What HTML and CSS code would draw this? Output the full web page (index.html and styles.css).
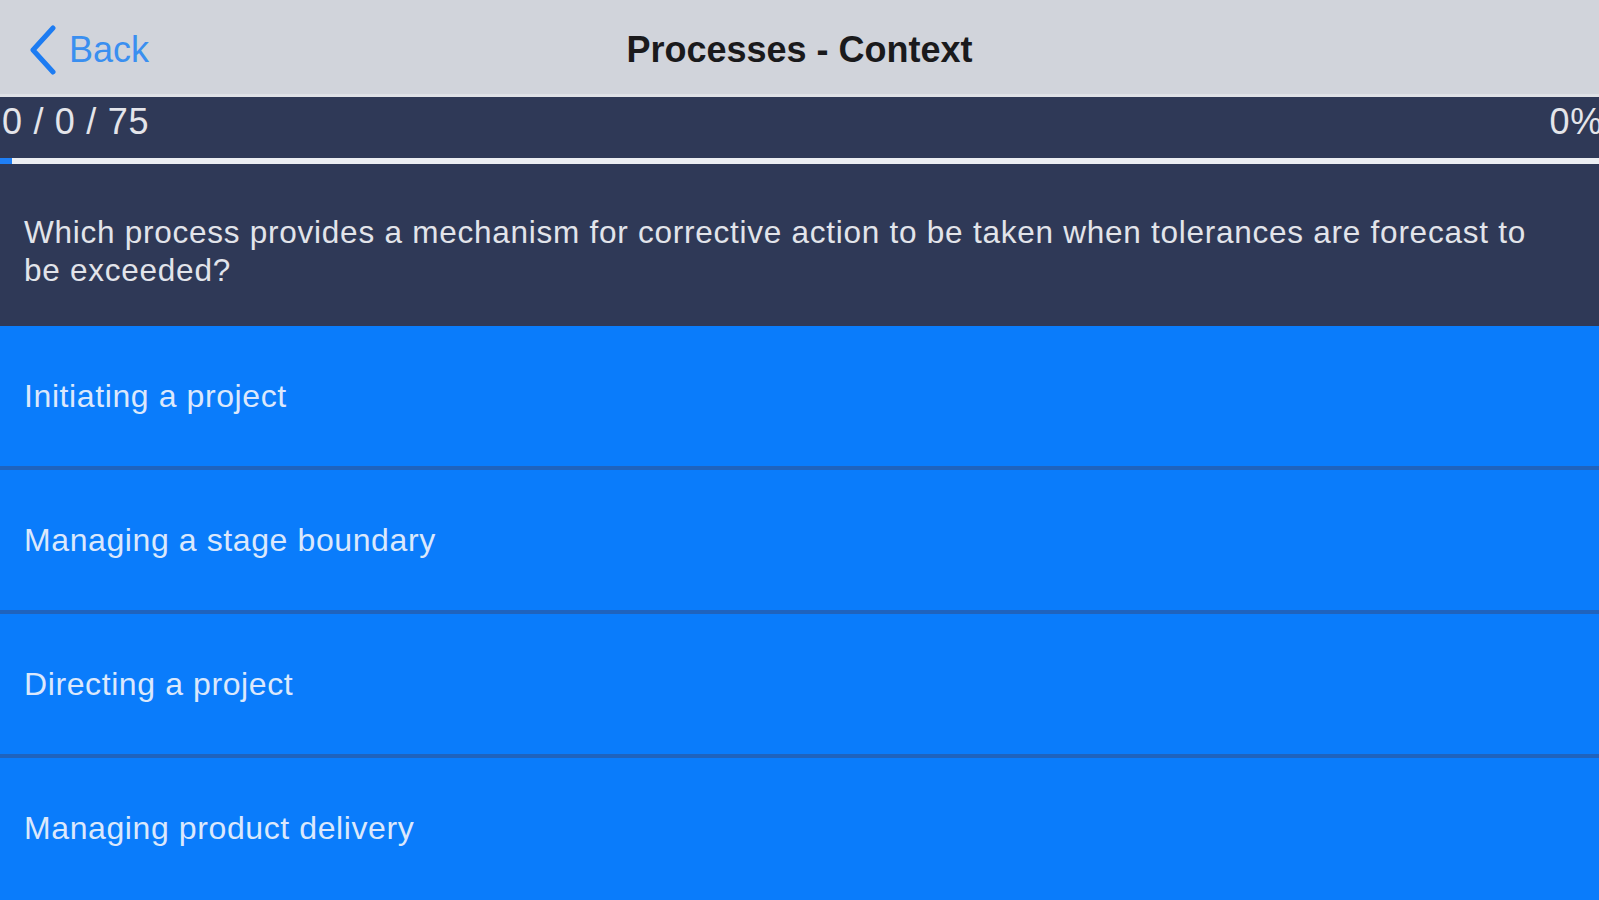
FILE: index.html
```html
<!DOCTYPE html>
<html>
<head>
<meta charset="utf-8">
<link rel="stylesheet" href="styles.css">
</head>
<body>
<header class="nav">
  <div class="back">
    <svg class="chev" width="30" height="50" viewBox="0 0 30 50"><polyline points="25,3 5,25 25,47" fill="none" stroke="#1d7cf2" stroke-width="5" stroke-linecap="round" stroke-linejoin="round"/></svg>
    <span class="back-label">Back</span>
  </div>
  <div class="title">Processes - Context</div>
</header>
<section class="status">
  <div class="counts">
    <span>0 / 0 / 75</span>
    <span class="pct">0%</span>
  </div>
  <div class="track"><div class="fill"></div></div>
</section>
<section class="question">
  Which process provides a mechanism for corrective action to be taken when tolerances are forecast to be exceeded?
</section>
<ul class="options">
  <li>Initiating a project</li>
  <li>Managing a stage boundary</li>
  <li>Directing a project</li>
  <li>Managing product delivery</li>
</ul>
</body>
</html>
```
FILE: styles.css
```css
html, body {
  margin: 0;
  padding: 0;
  width: 1599px;
  height: 900px;
  overflow: hidden;
  background: #0a7cfb;
  font-family: "Liberation Sans", Arial, sans-serif;
}
.nav {
  position: relative;
  height: 94px;
  background: #d1d4db;
  border-bottom: 3px solid #dfe1e6;
  display: flex;
  align-items: center;
  justify-content: center;
}
.back {
  position: absolute;
  left: 28px;
  top: 25px;
  display: flex;
  align-items: center;
  gap: 11px;
}
.chev { display: block; }
.back-label {
  color: #3a8ff0;
  font-size: 36px;
  line-height: 48px;
}
.title {
  font-size: 36px;
  font-weight: bold;
  color: #1a1a1c;
  margin-top: 6px;
}
.status {
  background: #2f3957;
  padding-top: 3px;
}
.counts {
  display: flex;
  justify-content: space-between;
  height: 44px;
  line-height: 44px;
  font-size: 36px;
  letter-spacing: 0.7px;
  color: #e4e5ea;
  padding-left: 2px;
  margin-right: -4px;
}
.track {
  margin-top: 14px;
  height: 6px;
  background: #eceef2;
}
.fill {
  width: 12px;
  height: 100%;
  background: #1f7ff5;
}
.question {
  background: #2f3957;
  color: #e2e4ea;
  font-size: 31.5px;
  letter-spacing: 0.75px;
  line-height: 38px;
  padding: 49px 30px 37px 24px;
  height: 76px;
}
.options {
  list-style: none;
  margin: 0;
  padding: 0;
}
.options li {
  height: 140px;
  line-height: 140px;
  padding-left: 24px;
  color: #dbe8fc;
  font-size: 32px;
  letter-spacing: 0.6px;
  border-bottom: 4px solid #1f63bd;
  background: #0a7cfb;
}
.options li:last-child {
  border-bottom-color: #0a7cfb;
}
```
